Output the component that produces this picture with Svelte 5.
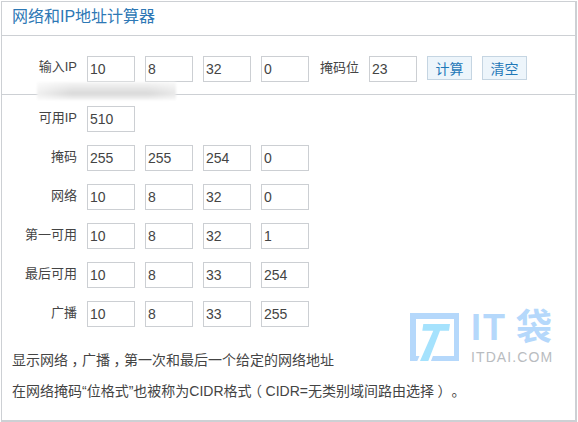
<script>
  const ipRows = [
    { label: '掩码', parts: [255, 255, 254, 0] },
    { label: '网络', parts: [10, 8, 32, 0] },
    { label: '第一可用', parts: [10, 8, 32, 1] },
    { label: '最后可用', parts: [10, 8, 33, 254] },
    { label: '广播', parts: [10, 8, 33, 255] }
  ];
</script>

<div class="panel">
  <h1 class="title">网络和IP地址计算器</h1>

  <div class="input-row">
    <span class="label">输入IP</span>
    <div class="octets">
      <input value="10" />
      <input value="8" />
      <input value="32" />
      <input value="0" />
    </div>
    <span class="mask-label">掩码位</span>
    <input value="23" />
    <button class="btn">计算</button>
    <button class="btn">清空</button>
  </div>

  <div class="results">
    <div class="row">
      <span class="label">可用IP</span>
      <div class="octets"><input value="510" /></div>
    </div>
    {#each ipRows as row}
      <div class="row">
        <span class="label">{row.label}</span>
        <div class="octets">
          {#each row.parts as part}
            <input value={part} />
          {/each}
        </div>
      </div>
    {/each}
  </div>

  <div class="notes">
    <p>显示网络<span class="punct">，</span>广播<span class="punct">，</span>第一次和最后一个给定的网络地址</p>
    <p>在网络掩码“位格式”也被称为CIDR格式<span class="punct">（</span>CIDR=无类别域间路由选择<span class="punct">）</span><span class="punct">。</span></p>
  </div>

  <!-- blurred-out line over the divider -->
  <div class="smudge"></div>

  <div class="watermark">
    <svg class="mark" width="49" height="48" viewBox="0 0 49 48">
      <path d="M0 0H49V48H0ZM6 6V43H44V6Z" fill="#b5d8fb" fill-rule="evenodd" />
      <path d="M23.3 18H30L18.3 48H10Z" fill="#fff" stroke="#fff" stroke-width="5" />
      <path d="M13.3 11H40L39 17.7H30L18.3 48H10L23.3 17.7H12.3Z" fill="#a5e2fd" />
    </svg>
    <div class="brand">
      <div class="brand-name">
        <span class="brand-latin">IT</span>
        <span class="brand-cjk">袋</span>
      </div>
      <span class="brand-url">ITDAI.COM</span>
    </div>
  </div>
</div>

<style>
  :global(body) {
    margin: 0;
    background: #fff;
  }

  .panel {
    position: relative;
    box-sizing: border-box;
    width: 576px;
    height: 421px;
    margin-left: 1px;
    margin-top: 1px;
    border: 1px solid #cdd0d4;
    border-right-width: 2px;
    border-bottom-width: 2px;
    font-family: "Liberation Sans", "Noto Sans CJK SC", sans-serif;
    color: #444;
    font-size: 13px;
    overflow: hidden;
  }

  .title {
    margin: 0;
    height: 33px;
    line-height: 30px;
    padding-left: 10px;
    font-size: 16px;
    font-weight: normal;
    color: #2d78b5;
    border-bottom: 1px solid #cdd0d4;
  }

  .input-row {
    display: flex;
    align-items: center;
    gap: 10px;
    height: 59px;
    padding-top: 7px;
    padding-left: 10px;
    box-sizing: border-box;
    border-bottom: 1px solid #cdd0d4;
  }

  .label {
    width: 65px;
    text-align: right;
    flex-shrink: 0;
    position: relative;
    top: -3px;
  }

  .octets {
    display: flex;
    gap: 10px;
  }

  .mask-label {
    margin-left: 1px;
    position: relative;
    top: -2px;
  }

  input {
    box-sizing: border-box;
    width: 48px;
    height: 26px;
    padding: 0 0 0 2px;
    border: 1px solid #cccfd3;
    background: #fff;
    color: #444;
    font: 14px "Liberation Sans", sans-serif;
    outline: none;
  }

  .btn {
    box-sizing: border-box;
    width: 45px;
    height: 24px;
    padding: 0;
    position: relative;
    top: -1px;
    border: 1px solid #c5d5e2;
    background: #edf5fb;
    color: #1f78b8;
    font: 14px "Liberation Sans", "Noto Sans CJK SC", sans-serif;
  }

  .results {
    display: flex;
    flex-direction: column;
    gap: 13px;
    padding: 11px 0 0 10px;
  }

  .row {
    display: flex;
    align-items: center;
    gap: 10px;
  }

  .notes {
    padding: 23px 0 0 10px;
    font-size: 14px;
  }

  .notes p {
    margin: 0 0 11px;
    line-height: 20px;
  }

  /* full-width punctuation sits centred in its cell in the original */
  .punct {
    font-feature-settings: "halt";
    padding: 0 3.5px;
  }

  .smudge {
    position: absolute;
    left: 35px;
    top: 80px;
    width: 139px;
    height: 18px;
    background:
      linear-gradient(90deg, rgba(255, 255, 255, 0.6), rgba(255, 255, 255, 0) 25%, rgba(255, 255, 255, 0) 80%, rgba(255, 255, 255, 0.4)),
      linear-gradient(#f7f7f7, #e6e6e6 35%, #d9d9d9 65%, #eeeeee 90%, #f6f6f6);
    filter: blur(1px);
  }

  .watermark {
    position: absolute;
    left: 408px;
    top: 311px;
    display: flex;
    gap: 12px;
  }

  .mark {
    display: block;
  }

  .brand {
    display: flex;
    flex-direction: column;
    margin-top: -1px;
  }

  .brand-name {
    display: flex;
    justify-content: space-between;
    width: 81px;
    height: 34px;
    color: #b5d8fb;
    font-weight: bold;
  }

  .brand-latin {
    font-size: 36px;
    line-height: 32px;
    letter-spacing: 2px;
  }

  .brand-cjk {
    font-size: 36px;
    line-height: 32px;
  }

  .brand-url {
    margin-top: 3px;
    font-size: 14px;
    line-height: 17px;
    letter-spacing: 1.1px;
    color: #b9bcc0;
  }
</style>
